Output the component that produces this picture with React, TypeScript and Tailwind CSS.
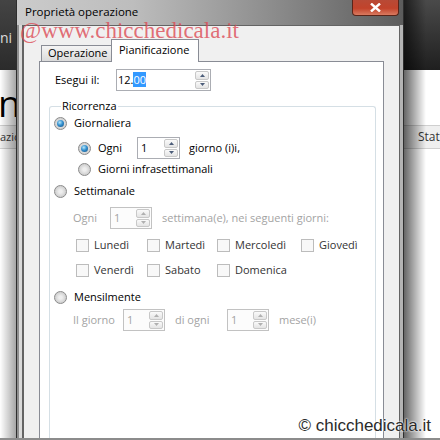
import React from "react";

const Radio = ({ checked = false, disabled = false }: { checked?: boolean; disabled?: boolean }) => (
  <span
    className={`flex h-[13px] w-[13px] shrink-0 items-center justify-center rounded-full border ${
      disabled
        ? "border-[#bdbdbd] bg-[#f3f3f3]"
        : "border-[#8a8a8a] bg-[radial-gradient(circle_at_50%_50%,#eeeeee_20%,#d2d2d2_65%,#f4f4f4_100%)]"
    }`}
  >
    {checked && (
      <span className="h-[7px] w-[7px] rounded-full bg-[radial-gradient(circle_at_40%_35%,#b8e8fa_0%,#3490cf_45%,#0f4a7c_100%)]" />
    )}
  </span>
);

const Check = () => (
  <span className="h-[13px] w-[13px] shrink-0 border border-[#bcbcbc] bg-[#f8f8f8]" />
);

const Spin = ({ disabled = false }: { disabled?: boolean }) => {
  const fill = disabled ? "#b0b0b0" : "#4c5d7a";
  return (
    <div className="flex h-full w-[15px] shrink-0 flex-col gap-px py-px pr-px">
      <div className="flex flex-1 items-center justify-center rounded-[2px] border border-[#c8c8c8] bg-[linear-gradient(#fafafa,#e4e4e4)]">
        <svg width="5" height="3" viewBox="0 0 5 3">
          <path d="M0 3L2.5 0L5 3Z" fill={fill} />
        </svg>
      </div>
      <div className="flex flex-1 items-center justify-center rounded-[2px] border border-[#c8c8c8] bg-[linear-gradient(#fafafa,#e4e4e4)]">
        <svg width="5" height="3" viewBox="0 0 5 3">
          <path d="M0 0L2.5 3L5 0Z" fill={fill} />
        </svg>
      </div>
    </div>
  );
};

const NumBox = ({ disabled = false, w }: { disabled?: boolean; w: string }) => (
  <div
    className={`flex h-[22px] shrink-0 items-center border ${w} ${
      disabled ? "border-[#c2c2c2] bg-[#fcfcfc] text-[#a3a3a3]" : "border-[#abadb3] bg-white text-black"
    }`}
  >
    <span className="flex-1 pl-[3px]">1</span>
    <Spin disabled={disabled} />
  </div>
);

const Day = ({ label, w }: { label: string; w?: string }) => (
  <div className={`flex items-center gap-[5px] ${w ?? ""}`}>
    <Check />
    <span>{label}</span>
  </div>
);

export default function App() {
  return (
    <div className="relative flex h-[440px] w-[440px] overflow-hidden bg-white font-['Open_Sans',sans-serif] text-[11px] leading-[16px] text-black after:absolute after:inset-x-0 after:bottom-0 after:h-[2px] after:bg-[#8c8c8c] after:content-['']">
      {/* left background strip */}
      <div className="relative flex w-[16px] shrink-0 flex-col overflow-hidden">
        <div className="h-[70px] whitespace-nowrap bg-[linear-gradient(#444,#2b2b2b)] pt-[30px] text-[14px] text-[#dcdcdc]">
          ni p
        </div>
        <div className="h-[55px] whitespace-nowrap pt-[14px] text-[37px] leading-[37px] -ml-[2px]">ni</div>
        <div className="h-[24px] whitespace-nowrap border-y border-[#cfcfcf] bg-[#efefef] pt-[3px] text-[#333]">
          azio
        </div>
        <div className="flex-1" />
        <div className="absolute inset-x-0 top-[70px] bottom-0 bg-[linear-gradient(to_right,rgba(0,0,0,0)_0%,rgba(0,0,0,0.35)_100%)]" />
      </div>

      {/* dialog window */}
      <div className="flex w-[388px] shrink-0 flex-col border-x border-[#2e2e2e]">
        <div className="relative h-[25px] shrink-0 bg-[linear-gradient(to_right,#cbcbcb_0%,#bdbdbd_30%,#8e8e8e_65%,#5c5c5c_100%)] pl-[8px] pt-[4px] text-[11.5px] text-black">
          Proprietà operazione
          <div className="absolute right-[4px] top-0 flex h-[16px] w-[47px] items-center justify-center rounded-b-[4px] border border-t-0 border-[#5a2418] bg-[linear-gradient(#b84a36,#c2432b_55%,#d97a60)]">
            <svg width="11" height="9" viewBox="0 0 11 9">
              <path d="M1 0.5L10 8.5M10 0.5L1 8.5" stroke="#ffffff" strokeWidth="2.4" />
            </svg>
          </div>
        </div>
        <div className="flex flex-1">
          <div className="w-[5px] shrink-0 bg-[linear-gradient(to_right,#8f8f8f_0px,#8f8f8f_2px,#dadada_2px)]" />
          <div className="flex flex-1 flex-col border-l-2 border-r border-t border-[#646464] bg-[#f0f0f0] pl-[15px] pr-[15px] pt-[13px]">
            {/* tabs */}
            <div className="flex h-[22px] items-end pl-[2px]">
              <div className="h-[16px] w-[71px] border border-b-0 border-[#898c95] bg-[linear-gradient(#f4f4f4,#e8e8e8_50%,#dadada)] pl-[6px] leading-[14px]">
                Operazione
              </div>
              <div className="relative z-10 -mb-px -ml-px h-[23px] w-[88px] border border-b-0 border-[#898c95] bg-white pl-[7px] pt-[2px]">
                Pianificazione
              </div>
            </div>
            {/* tab page */}
            <div className="flex flex-1 flex-col border border-b-0 border-[#898c95] bg-white">
              <div className="ml-[15px] mt-[7px] flex h-[22px] items-center">
                <span className="w-[61px]">Esegui il:</span>
                <div className="flex h-[22px] w-[95px] items-center border border-[#abadb3]">
                  <span className="flex-1 pl-[1px]">
                    12.<span className="bg-[#3399ff] text-white">00</span>
                  </span>
                  <Spin />
                </div>
              </div>
              <fieldset className="ml-[9px] mt-[7px] w-[327px] flex-1 rounded-t-[3px] border border-b-0 border-[#d5dfe5] pl-[4px]">
                <legend className="ml-[7px] px-[1px] leading-[16px]">Ricorrenza</legend>
                <div className="mt-px flex h-[16px] items-center gap-[7px]">
                  <Radio checked />
                  <span>Giornaliera</span>
                </div>
                <div className="mt-[6px] flex h-[22px] items-center pl-[24px]">
                  <Radio checked />
                  <span className="ml-[7px] w-[39px]">Ogni</span>
                  <NumBox w="w-[43px]" />
                  <span className="ml-[9px]">giorno (i)i,</span>
                </div>
                <div className="mt-[2px] flex h-[16px] items-center gap-[7px] pl-[24px]">
                  <Radio />
                  <span>Giorni infrasettimanali</span>
                </div>
                <div className="mt-[6px] flex h-[16px] items-center gap-[7px]">
                  <Radio />
                  <span>Settimanale</span>
                </div>
                <div className="mt-[8px] flex h-[22px] items-center pl-[19px] text-[#a3a3a3]">
                  <span className="w-[37px]">Ogni</span>
                  <NumBox disabled w="w-[42px]" />
                  <span className="ml-[10px]">settimana(e), nei seguenti giorni:</span>
                </div>
                <div className="mt-[8px] flex h-[16px] items-center pl-[22px] text-[#333]">
                  <Day label="Lunedì" w="w-[71px]" />
                  <Day label="Martedì" w="w-[70px]" />
                  <Day label="Mercoledì" w="w-[84px]" />
                  <Day label="Giovedì" />
                </div>
                <div className="mt-[9px] flex h-[16px] items-center pl-[22px] text-[#333]">
                  <Day label="Venerdì" w="w-[71px]" />
                  <Day label="Sabato" w="w-[70px]" />
                  <Day label="Domenica" />
                </div>
                <div className="mt-[11px] flex h-[16px] items-center gap-[7px]">
                  <Radio />
                  <span>Mensilmente</span>
                </div>
                <div className="mt-[4px] flex h-[22px] items-center pl-[19px] text-[#a3a3a3]">
                  <span className="w-[50px]">Il giorno</span>
                  <NumBox disabled w="w-[42px]" />
                  <span className="ml-[10px] w-[52px]">di ogni</span>
                  <NumBox disabled w="w-[42px]" />
                  <span className="ml-[10px]">mese(i)</span>
                </div>
              </fieldset>
            </div>
          </div>
          <div className="w-[3px] shrink-0 bg-[#b4b4b4]" />
        </div>
      </div>

      {/* right background strip */}
      <div className="relative flex flex-1 flex-col overflow-hidden">
        <div className="h-[70px] bg-[linear-gradient(#4a4a4a,#1f1f1f)]" />
        <div className="h-[55px]" />
        <div className="h-[24px] border-y border-[#cfcfcf] bg-[#efefef] pl-[14px] pt-[3px] text-[12px] text-[#333]">
          Stat
        </div>
        <div className="flex-1" />
        <div className="absolute inset-y-0 left-0 w-[22px] bg-[linear-gradient(to_right,rgba(0,0,0,0.6),rgba(0,0,0,0))]" />
      </div>

      {/* watermarks */}
      <div className="pointer-events-none absolute left-[20px] top-[19px] whitespace-nowrap font-['Liberation_Serif',serif] text-[23px] leading-none text-[#dc4a55]/80">
        @www.chicchedicala.it
      </div>
      <div className="pointer-events-none absolute bottom-[6px] right-[9px] whitespace-nowrap font-['Liberation_Sans',sans-serif] text-[17px] leading-none text-[#2a2a2a] [text-shadow:0_0_2px_#fff,0_0_2px_#fff]">
        © chicchedicala.it
      </div>
    </div>
  );
}
